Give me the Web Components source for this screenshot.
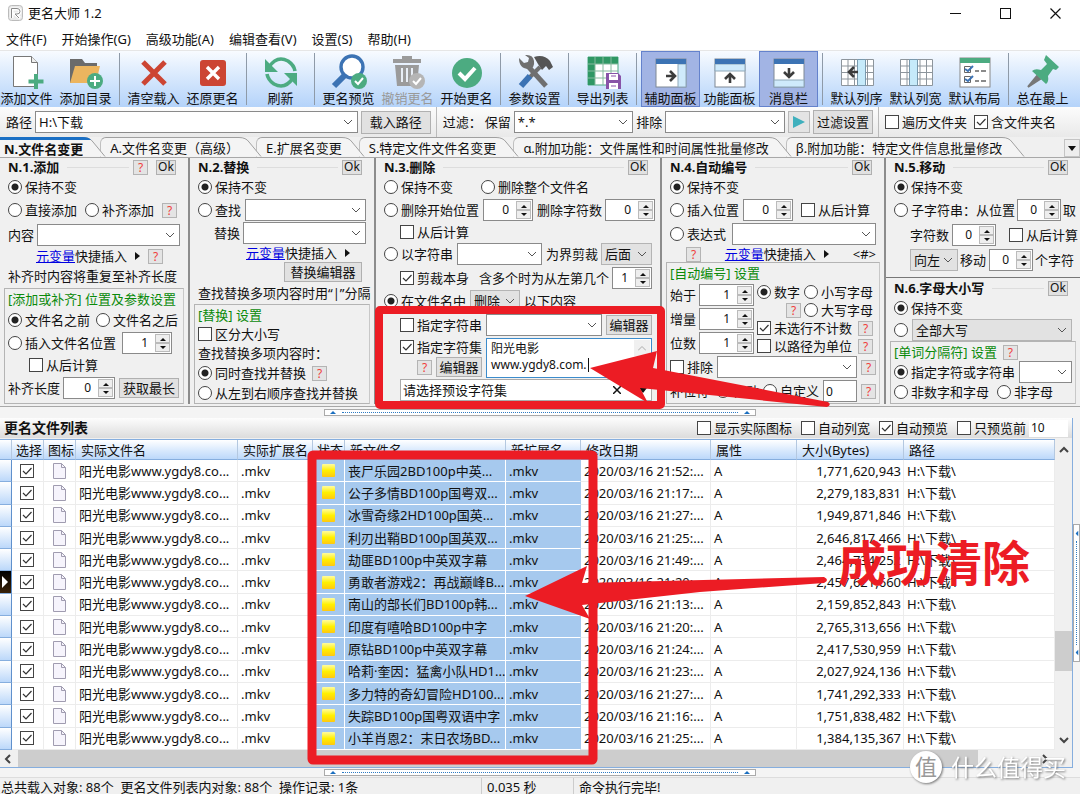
<!DOCTYPE html>
<html lang="zh-CN">
<head>
<meta charset="utf-8">
<title>更名大师 1.2</title>
<style>
html,body{margin:0;height:100%;overflow:hidden}
body{font:13px/18px "Noto Sans","Noto Sans CJK SC",sans-serif;color:#111;background:#f0f0f0}
</style>
</head>
<body>
<rm-app></rm-app>
<script>
const base = `
*{box-sizing:border-box}
:host{white-space:nowrap}
:host([hidden]){display:none}
button,input,select,textarea{font:inherit;color:inherit;margin:0;border-radius:0;outline:0}
button{padding:0;background:none;border:0}
svg{display:block;flex:none}
a{color:#0000e0}
`;
const define = (tag, css, html) => customElements.define(tag, class extends HTMLElement {
  connectedCallback() {
    if (this.shadowRoot) return;
    const t = document.createElement('template');
    t.innerHTML = `<style>${base}${css}</style>` + (typeof html === 'function' ? html(this) : html);
    this.attachShadow({ mode: 'open' }).append(t.content.cloneNode(true));
  }
});
const attr = (el, name, fallback = '') => el.getAttribute(name) ?? fallback;

/* ---------- small controls ---------- */
define('rm-check', `
:host{display:inline-block}
label{display:flex;align-items:center;gap:3px}
input{appearance:none;width:14px;height:14px;border:1px solid #444;background:#fff;flex:none}
input:checked{background:#fff url("data:image/svg+xml,%3Csvg xmlns='http://www.w3.org/2000/svg' viewBox='0 0 12 12'%3E%3Cpath d='M2 6l3 3 5.500-6' fill='none' stroke='%23333' stroke-width='1.200'/%3E%3C/svg%3E")}
`, el => `<label><input type="checkbox" ${el.hasAttribute('checked') ? 'checked' : ''} aria-label="${attr(el, 'label', '选择')}"><slot></slot></label>`);

define('rm-radio', `
:host{display:inline-block}
label{display:flex;align-items:center;gap:3px}
input{appearance:none;width:14px;height:14px;border:1px solid #444;border-radius:50%;background:#fff;flex:none}
input:checked{background:radial-gradient(circle,#222 0 3px,#fff 4px)}
`, el => `<label><input type="radio" ${el.hasAttribute('checked') ? 'checked' : ''}><slot></slot></label>`);

define('rm-combo', `
:host{display:inline-flex;min-width:0}
:host([grow]){flex:1}
label{display:flex;align-items:center;gap:3px;flex:1;min-width:0}
.box{display:grid;align-items:center;width:var(--w,100%);flex:1 1 0;min-width:0}
:host(:not([grow])) .box{flex:none}
select,svg{grid-area:1/1}
select{appearance:none;width:100%;height:22px;border:1px solid #8a8a8a;background:#fff;padding:0 14px 0 3px}
:host([flat]) select{background:#e2e2e2;border-color:#b4b4b4}
svg{justify-self:end;margin-right:5px;pointer-events:none}
`, el => `<label><slot></slot><span class="box"><select aria-label="${attr(el, 'label', '内容')}"><option>${attr(el, 'value')}</option></select>
<svg width="10" height="6" viewBox="0 0 10 6"><path d="M1 1l4 4 4-4" fill="none" stroke="#555"/></svg></span></label>`);

define('rm-spin', `
:host{display:inline-flex}
label{display:flex;align-items:center;gap:3px}
.box{display:flex;width:var(--w,50px);height:22px;border:1px solid #8a8a8a;background:#fff;padding:1px}
input{appearance:textfield;border:0;background:none;min-width:0;flex:1;text-align:right;padding:0 7px 0 0;font-size:12px}
input::-webkit-inner-spin-button{appearance:none}
.b{display:grid;grid-template-rows:1fr 1fr;width:15px}
button{display:grid;place-items:center;background:#eee;border:1px solid #bbb}
`, el => `<label><slot></slot><span class="box"><input type="number" value="${attr(el, 'value', '0')}" aria-label="${attr(el, 'label', '数值')}"><span class="b">
<button type="button" aria-label="增加"><svg width="6" height="4" viewBox="0 0 6 4"><path d="M0 4l3-3 3 3z" fill="#111"/></svg></button>
<button type="button" aria-label="减少"><svg width="6" height="4" viewBox="0 0 6 4"><path d="M0 0l3 3 3-3z" fill="#111"/></svg></button></span></span></label>`);

define('rm-button', `
:host{display:inline-flex}
button{width:var(--w,auto);height:var(--h,20px);line-height:12px;background:#e1e1e1;border:1px solid #b0b0b0;text-align:center}
`, `<button type="button"><slot></slot></button>`);

define('rm-help', `
:host{display:inline-flex}
button{width:15px;height:15px;line-height:13px;background:#e4e4e4;border:1px solid #b4b4b4;color:#f0403c;font-size:12px}
`, `<button type="button" aria-label="帮助">?</button>`);

define('rm-meta', `:host{display:inline-flex;align-items:center;gap:8px}`,
`<span><a href="#meta">元变量</a>快捷插入</span><svg width="5" height="8" viewBox="0 0 5 8"><path d="M0 0l5 4-5 4z" fill="#111"/></svg>`);

/* ---------- title, menu ---------- */
define('rm-titlebar', `
:host{display:flex;align-items:center;height:26px;background:#fff}
.logo{margin:0 5px 0 8px}
h1{font:inherit;margin:0;flex:1}
button{width:50px;height:26px;display:grid;place-items:center}
`, `<svg class="logo" width="15" height="16" viewBox="0 0 15 16"><rect x=".5" y=".5" width="14" height="15" rx="3" fill="#e9e9e9" stroke="#bbb"/><path d="M4 13V4h5q3 0 3 2.500T9 9H7l5 4" fill="none" stroke="#fff" stroke-width="3"/><path d="M3.500 13V3.500H9q3 0 3 2.800T9 9H7l4 4" fill="none" stroke="#888"/></svg>
<h1>更名大师 1.2</h1>
<button aria-label="最小化"><svg width="11" height="11"><path d="M0 5.500h11" stroke="#111"/></svg></button>
<button aria-label="最大化"><svg width="11" height="11"><rect x=".5" y=".5" width="10" height="10" fill="none" stroke="#111"/></svg></button>
<button aria-label="关闭"><svg width="11" height="11"><path d="M.5 .5l10 10M10.500 .5l-10 10" stroke="#111" stroke-width="1.200"/></svg></button>`);

define('rm-menubar', `
:host{display:flex;gap:15px;align-items:center;height:24px;padding:2px 6px 0;background:#fff}
`, ['文件(F)', '开始操作(G)', '高级功能(A)', '编辑查看(V)', '设置(S)', '帮助(H)'].map(t => `<button>${t}</button>`).join(''));

/* ---------- toolbar ---------- */
define('rm-tool', `
:host{display:block;width:59px;flex:none}
button{width:100%;height:56px;display:flex;flex-direction:column;align-items:center;padding-top:1px;line-height:16px;border:1px solid transparent}
:host([on]) button{background:#a2b4e4;border-color:#6482cc}
:host([off]) button{color:#999}
`, el => `<button type="button"><slot name="icon"></slot><span>${attr(el, 'text')}</span></button>`);

const G = '#4cab81', B = '#3c73b4', R = '#cc4533', D = '#6f6f6f';
const win = inner => `<rect x="3" y="6" width="30" height="28" fill="#fff" stroke="#7e8894"/>${inner}<path d="M3 6h30v5H3z" fill="${B}"/>`;
const gridLines = '<path d="M2.500 6.500h32v26h-32zM2.500 13h32M2.500 19.500h32M2.500 26h32M9 6.500v26M15.500 6.500v26M22 6.500v26M28.500 6.500v26" fill="#fff" stroke="#8d959c"/>';
const arrow = (x, y, r) => `<g transform="translate(${x} ${y}) rotate(${r})"><path d="M-5 0h8M-1-5l5 5-5 5" fill="none" stroke="#3c3c3c" stroke-width="2.600"/></g>`;
const icons = {
  addfile: `<path d="M4.500 3.500h18l6 6v24h-24z" fill="#fff" stroke="#777"/><path d="M22.500 3.500v6h6" fill="#eee" stroke="#777"/><path d="M27 21v15M19.500 28.500h15" stroke="${G}" stroke-width="4"/>`,
  adddir: `<path d="M2 6h12l3 4h12v20H2z" fill="#6b6b6b"/><path d="M7 13h25l-4 17H2z" fill="#ecb55f"/><circle cx="27" cy="28" r="8" fill="${G}"/><path d="M27 23v10M22 28h10" stroke="#fff" stroke-width="2"/>`,
  clear: `<path d="M7 9l22 22M29 9L7 31" stroke="${R}" stroke-width="5"/>`,
  undo: `<rect x="5" y="7" width="26" height="26" rx="3" fill="${R}"/><path d="M12 14l12 12M24 14L12 26" stroke="#fff" stroke-width="3.400"/>`,
  refresh: `<g fill="none" stroke="${G}" stroke-width="3.600"><path d="M6 14Q14 2 25 8q6 4 7 10"/><path d="M30 25q-8 12-19 6-6-4-7-10"/></g><path d="M2 6v13h13zM34 33V20H21z" fill="${G}"/>`,
  preview: `<path d="M15 21L3 33" stroke="${B}" stroke-width="6"/><circle cx="21" cy="14" r="11" fill="#fff" stroke="${B}" stroke-width="3.400"/><circle cx="28" cy="28" r="8" fill="${G}"/><path d="M24 28l3 3 5-6" fill="none" stroke="#fff" stroke-width="2"/>`,
  trash: `<path d="M5 12h24l-2 21H7zM3 6h28v4H3zM12 3h10v3H12z" fill="#9b9b9b"/><path d="M12 15v14M17 15v14M22 15v8" stroke="#e8eef6" stroke-width="2"/><circle cx="27" cy="28" r="8" fill="#b5b5b5"/><path d="M23 28l3 3 5-6" fill="none" stroke="#fff" stroke-width="2"/>`,
  start: `<circle cx="18" cy="20" r="15" fill="${G}"/><path d="M10 20l6 6 10-11" fill="none" stroke="#fff" stroke-width="4"/>`,
  tools: `<path d="M9 11l20 22" stroke="${D}" stroke-width="5"/><path d="M2 5l5 5 4-1 1-4-4-3q8-1 9 6t-5 8q-10 0-10-11z" fill="${D}"/><path d="M23 14L13 24" stroke="${D}" stroke-width="4"/><path d="M17 4q10-3 16 4l3 6-4 3-3-4-4 4-4-6z" fill="#555"/><path d="M13 23L4 33" stroke="${B}" stroke-width="6"/>`,
  export: `<path d="M3 4h30v28H3z" fill="#fff" stroke="${G}"/><path d="M3 4h30v7H10v21H3z" fill="#2f9764"/><path d="M3 11h30M3 18h30M3 25h30M10 4v28M18 4v28M26 4v28" stroke="#86b99e"/><path d="M21 20h12l3 3v13H21z" fill="#8853a8"/><path d="M24 21h9v6h-9zM24 30h9v6h-9z" fill="#fff"/><path d="M26 23h5M26 33h5" stroke="#8853a8"/>`,
  side: win('<path d="M25 11h8v23h-8z" fill="#cfeafb" stroke="#8fa8b8"/>') + arrow(18, 23, 0),
  func: win('<path d="M3 11h30v7H3z" fill="#cfeafb" stroke="#8fa8b8"/>') + arrow(18, 25, -90),
  msg: win('<path d="M3 27h30v7H3z" fill="#cfeafb" stroke="#8fa8b8"/>') + arrow(18, 20, 90),
  order: gridLines + '<path d="M18.500 6.500h8v26h-8z" fill="#c6eafa" stroke="#7a99ad"/>' + arrow(14, 19, 180),
  width: gridLines + '<path d="M11.500 6.500h8v26h-8z" fill="#c6eafa" stroke="#7a99ad"/>',
  layout: `<rect x="3" y="5" width="30" height="29" fill="#fff" stroke="#888"/><path d="M3 5h30v5H3z" fill="${G}"/><path d="M7.500 13.500h6v6h-6zM7.500 23.500h6v6h-6z" fill="none" stroke="#666"/><path d="M8 16l3 2 5-5M8 26l3 2 5-5" fill="none" stroke="${B}" stroke-width="2"/><path d="M18 18h4M24 18h5M18 28h4M24 28h5" stroke="#666" stroke-width="1.500"/>`,
  pin: `<path d="M12 23L3 34l12-8z" fill="#777" stroke="#777" stroke-width="2"/><path d="M21 2l13 12-3 3-3-1-5 7q1 6-2 8L7 18q3-3 9-1l6-6-3-4z" fill="${G}"/>`
};
const tools = [['addfile', '添加文件'], ['adddir', '添加目录'], 0, ['clear', '清空载入'], ['undo', '还原更名'], 0, ['refresh', '刷新'], 0,
  ['preview', '更名预览'], ['trash', '撤销更名', 'off'], ['start', '开始更名'], 0, ['tools', '参数设置'], 0, ['export', '导出列表'], 0,
  ['side', '辅助面板', 'on'], ['func', '功能面板'], ['msg', '消息栏', 'on'], 0, ['order', '默认列序'], ['width', '默认列宽'], ['layout', '默认布局'], 0, ['pin', '总在最上']];
define('rm-toolbar', `
:host{display:flex;height:57px;background:linear-gradient(#f8fbff,#dcebfd 40%,#b4d3fa);border-top:1px solid #e6e6e6;overflow:hidden}
nav{display:flex;margin-left:-3px}
hr{width:1px;height:52px;margin:2px 4px;border:0;background:#8e9aa8}
`, '<nav>' + tools.map(t => t ? `<rm-tool text="${t[1]}" ${t[2] || ''}><svg slot="icon" width="36" height="37" viewBox="0 0 36 37">${icons[t[0]]}</svg></rm-tool>` : '<hr>').join('') + '</nav>');

/* ---------- path and filter bar ---------- */
define('rm-pathbar', `
:host{display:flex;align-items:center;gap:3px;height:30px;padding:0 24px 0 6px;background:linear-gradient(#fcfcfc,#e9e9e9)}
i{width:1px;height:30px;background:#bbb;margin:0 3px 0 2px}
.path{flex:355 1 0}
.f{flex:150 1 0}
.play button{width:22px;height:22px;display:grid;place-items:center;background:#e4e4e4;border:1px solid #b8b8b8}
rm-check+rm-check{margin-left:4px}
`, `<rm-combo grow class="path" value="H:\\下载" label="路径">路径</rm-combo>
<rm-button style="--w:70px;--h:23px">载入路径</rm-button><i></i>
<span>过滤：</span><rm-combo grow class="f" value="*.*" label="保留">保留</rm-combo>
<rm-combo grow class="f" label="排除">排除</rm-combo>
<span class="play"><button aria-label="应用过滤"><svg width="12" height="12"><path d="M0 0l12 6-12 6z" fill="#3fb0bd"/></svg></button></span>
<rm-button style="--w:60px;--h:24px">过滤设置</rm-button><i></i>
<rm-check label="遍历文件夹">遍历文件夹</rm-check><rm-check checked label="含文件夹名">含文件夹名</rm-check>`);

/* ---------- tabs ---------- */
define('rm-tab', `
:host{display:flex;position:relative;margin-right:-7px}
button{height:20px;background:#f4f4f4;border-top:1px solid #a0a0a0;border-left:1px solid #c0c0c0;border-top-left-radius:6px;padding:0 0 0 9px;display:flex;align-items:center}
:host([on]) button{padding-left:4px;font-weight:bold;border-top:3px solid #1a6fc4;border-left:0;border-radius:0}
`, el => `<button role="tab"><slot></slot></button><svg width="24" height="20" viewBox="0 0 24 20"><path d="M0 .5Q7 .5 10 5L22 19.500H0z" fill="#f4f4f4"/><path d="M0 .5Q7 .5 10 5L22 19.500" fill="none" stroke="#a0a0a0"/>${el.hasAttribute('on') ? '<path d="M0 0Q6 0 8 3H0z" fill="#1a6fc4"/>' : ''}</svg>`);
const tabs = ['N.文件名变更', 'A.文件名变更（高级）', 'E.扩展名变更', 'S.特定文件文件名变更', 'α.附加功能：文件属性和时间属性批量修改', 'β.附加功能：特定文件信息批量修改'];
define('rm-tabs', `
:host{display:flex;align-items:flex-end;height:21px;background:#f0f0f0;border-bottom:1px solid #a8a8a8}
.more{margin-left:auto;width:16px;height:18px;display:grid;place-items:center;border:1px solid #c4c4c4;background:#eee}
`, tabs.map((t, i) => `<rm-tab ${i ? '' : 'on'} style="z-index:${9 - i}">${t}</rm-tab>`).join('') +
`<button class="more" aria-label="更多"><svg width="8" height="5"><path d="M0 0h8l-4 5z" fill="#111"/></svg></button>`);

/* ---------- function panels ---------- */
define('rm-panel', `
:host{display:flex;flex-direction:column;min-width:0}
header{display:flex;align-items:center;gap:8px;height:18px;padding:0 12px 0 8px;flex:none}
h2{font:inherit;font-weight:bold;margin:0}
header span{flex:1;border-top:1px solid #ddd;margin-right:-4px}
rm-button{font-size:12px}
`, el => `<header><h2>${attr(el, 'title-text')}</h2><span></span>${el.hasAttribute('help') ? '<rm-help></rm-help>' : ''}<rm-button style="--w:20px;--h:15px">Ok</rm-button></header><slot></slot>`);

define('rm-row', `
:host{display:flex;align-items:center;gap:var(--gap,4px);padding:0 8px;flex:none;height:22px}
:host([h="16"]){height:16px}
:host([h="18"]){height:18px}
:host([h="20"]){height:20px}
:host([h="24"]){height:24px}
:host([h="26"]){height:26px}
:host([in="1"]){padding-left:24px}
:host([in="2"]){padding-left:36px}
:host([in="3"]){padding-left:56px}
:host([gap="2"]){--gap:2px;padding-right:2px}
:host([gap="6"]){--gap:6px}
:host([gap="8"]){--gap:8px}
:host([end]){justify-content:flex-end;padding-right:12px}
`, `<slot></slot>`);

define('rm-group', `
:host{display:flex;flex-direction:column;margin:0 4px;border:1px solid #b4b4b4;border-right-color:#c8c8c8;flex:1}
.t{display:flex;align-items:center;gap:6px;height:20px;padding:0 3px;color:#0a8a0a}
::slotted(rm-row){padding-right:3px}
::slotted(rm-row:not([in])){padding-left:3px}
`, el => `<div class="t">${attr(el, 'title-text')}${el.hasAttribute('help') ? '<rm-help></rm-help>' : ''}</div><slot></slot>`);

define('rm-panels', `
:host{display:grid;grid-template-columns:190fr 186fr 286fr 224fr 194fr;height:249px;padding-bottom:3px;border-bottom:1px solid #a8a8a8;background:#f0f0f0}
:host>rm-panel,.stack{border-right:2px solid #8c8c8c;min-width:0}
.stack{display:flex;flex-direction:column;border-right:0}
.stack rm-panel:last-child{flex:1;border-top:1px solid #777;margin-top:5px;padding-top:1px}
.set{display:grid;grid-template-columns:auto 1fr;grid-template-rows:18px 20px;gap:1px 4px;padding:0 8px 0 24px;height:40px}
.area{grid-area:1/2/3/3;display:grid;position:relative}
textarea{border:1px solid #3c8ccc;background:#fff;resize:none;padding:2px 4px;line-height:16px;width:100%;height:40px;font-size:12px;overflow:hidden}
.caret{position:absolute;left:102px;top:20px;width:1px;height:14px;background:#111}
.up{position:absolute;right:2px;top:2px;width:16px;height:16px;display:grid;place-items:center;background:#f0f0f0}
.set span{display:flex;align-items:center;justify-content:flex-end;gap:4px}
.preset{flex:1;height:22px;display:flex;align-items:center;background:#fff;border:1px solid #aaa;padding-right:4px}
.preset input{border:0;background:none;flex:1;min-width:0;padding:0 2px}
.preset button{width:14px;margin-right:12px}
.num{display:grid;grid-template-columns:auto 1fr;gap:3px;padding:0 3px}
.num .l{display:grid;grid-template-rows:repeat(3,24px)}
.num .r{display:grid;grid-template-rows:repeat(4,18px);align-items:center}
.num .r div{display:flex;align-items:center;gap:3px;padding-right:3px}
.num .r div.e{justify-content:flex-end}
.num .r rm-help{margin-left:auto}
.num .r .e rm-help{margin-left:0}
.own{width:34px;height:22px;border:1px solid #8a8a8a;background:#fff;padding:0 2px;font-size:12px}
.p,.q{margin-left:auto}
`, `
<rm-panel title-text="N.1.添加" help>
<rm-row><rm-radio checked>保持不变</rm-radio></rm-row>
<rm-row h="24" gap="8"><rm-radio>直接添加</rm-radio><rm-radio>补齐添加</rm-radio><rm-help></rm-help></rm-row>
<rm-row h="26"><rm-combo grow label="内容">内容</rm-combo></rm-row>
<rm-row h="16" in="2"><rm-meta></rm-meta><span></span><rm-help></rm-help></rm-row>
<rm-row h="24">补齐时内容将重复至补齐长度</rm-row>
<rm-group title-text="[添加或补齐] 位置及参数设置">
<rm-row gap="6"><rm-radio checked>文件名之前</rm-radio><rm-radio>文件名之后</rm-radio></rm-row>
<rm-row h="24" gap="6"><rm-radio>插入文件名位置</rm-radio><rm-spin value="1"></rm-spin></rm-row>
<rm-row h="20" in="1"><rm-check label="从后计算">从后计算</rm-check></rm-row>
<rm-row h="26"><rm-spin style="--w:52px" label="补齐长度">补齐长度</rm-spin><rm-button style="--w:60px">获取最长</rm-button></rm-row>
</rm-group></rm-panel>

<rm-panel title-text="N.2.替换">
<rm-row><rm-radio checked>保持不变</rm-radio></rm-row>
<rm-row h="24"><rm-radio>查找</rm-radio><rm-combo grow label="查找"></rm-combo></rm-row>
<rm-row in="1"><rm-combo grow label="替换">替换</rm-combo></rm-row>
<rm-row h="18" in="3"><rm-meta></rm-meta></rm-row>
<rm-row h="20" end><rm-button style="--w:78px">替换编辑器</rm-button></rm-row>
<rm-row>查找替换多项内容时用“|”分隔</rm-row>
<rm-group title-text="[替换] 设置">
<rm-row h="18"><rm-check label="区分大小写">区分大小写</rm-check></rm-row>
<rm-row h="20">查找替换多项内容时：</rm-row>
<rm-row h="20" gap="6"><rm-radio checked>同时查找并替换</rm-radio><rm-help></rm-help></rm-row>
<rm-row h="20"><rm-radio>从左到右顺序查找并替换</rm-radio></rm-row>
</rm-group></rm-panel>

<rm-panel title-text="N.3.删除">
<rm-row><rm-radio>保持不变</rm-radio><span style="width:20px"></span><rm-radio>删除整个文件名</rm-radio></rm-row>
<rm-row h="24"><rm-radio>删除开始位置</rm-radio><rm-spin></rm-spin><rm-spin class="p" label="删除字符数">删除字符数</rm-spin></rm-row>
<rm-row h="20" in="1"><rm-check label="从后计算">从后计算</rm-check></rm-row>
<rm-row h="24"><rm-radio>以字符串</rm-radio><rm-combo grow label="以字符串"></rm-combo><rm-combo flat value="后面" style="--w:51px">为界剪裁</rm-combo></rm-row>
<rm-row h="24" in="1"><rm-check checked label="剪裁本身">剪裁本身</rm-check><rm-spin class="p" value="1" style="--w:40px">含多个时为从左第几个</rm-spin></rm-row>
<rm-row><rm-radio checked>在文件名中</rm-radio><rm-combo flat value="删除" style="--w:50px"></rm-combo><span>以下内容</span></rm-row>
<rm-row h="26" in="1"><rm-check label="指定字符串">指定字符串</rm-check><rm-combo grow label="指定字符串"></rm-combo><rm-button style="--w:46px">编辑器</rm-button></rm-row>
<div class="set"><rm-check checked label="指定字符集">指定字符集</rm-check><span><rm-help></rm-help><rm-button style="--w:46px">编辑器</rm-button></span><div class="area"><textarea aria-label="字符集">阳光电影
www.ygdy8.com.</textarea><div class="caret"></div><div class="up"><svg width="8" height="5"><path d="M0 4.500l4-4 4 4" fill="none" stroke="#aaa"/></svg></div></div></div>
<rm-row h="24" in="1"><div class="preset"><input value="请选择预设字符集" aria-label="预设字符集"><button aria-label="清除"><svg width="8" height="8"><path d="M0 0l8 8M8 0L0 8" stroke="#111" stroke-width="1.500"/></svg></button><svg width="8" height="5"><path d="M0 0h8l-4 5z" fill="#111"/></svg></div></rm-row>
</rm-panel>

<rm-panel title-text="N.4.自动编号">
<rm-row><rm-radio checked>保持不变</rm-radio></rm-row>
<rm-row h="24"><rm-radio>插入位置</rm-radio><rm-spin></rm-spin><span></span><rm-check label="从后计算">从后计算</rm-check></rm-row>
<rm-row h="24" gap="6"><rm-radio>表达式</rm-radio><rm-combo grow label="表达式"></rm-combo></rm-row>
<rm-row h="16" in="1"><rm-help></rm-help><rm-meta class="p"></rm-meta><span class="p">&lt;#&gt;</span></rm-row>
<rm-group title-text="[自动编号] 设置">
<div class="num"><div class="l"><rm-spin value="1" style="--w:55px">始于</rm-spin><rm-spin value="1" style="--w:55px">增量</rm-spin><rm-spin value="1" style="--w:55px">位数</rm-spin></div>
<div class="r"><div><rm-radio checked>数字</rm-radio><rm-radio class="q">小写字母</rm-radio></div><div class="e"><rm-help></rm-help><rm-radio>大写字母</rm-radio></div><div><rm-check checked>未选行不计数</rm-check><rm-help></rm-help></div><div><rm-check>以路径为单位</rm-check><rm-help></rm-help></div></div></div>
<rm-row h="24"><rm-check label="排除">排除</rm-check><rm-combo grow label="排除"></rm-combo><rm-help></rm-help></rm-row>
<rm-row h="24"><span>补位符</span><rm-radio class="q">自动</rm-radio><rm-radio>自定义</rm-radio><input class="own" value="0" aria-label="自定义"><rm-help></rm-help></rm-row>
</rm-group></rm-panel>

<div class="stack"><rm-panel title-text="N.5.移动">
<rm-row><rm-radio checked>保持不变</rm-radio></rm-row>
<rm-row h="24" gap="2"><rm-radio>子字符串：从位置</rm-radio><rm-spin style="--w:44px"></rm-spin>取</rm-row>
<rm-row h="26" in="1" gap="2"><rm-spin style="--w:44px">字符数</rm-spin><rm-check class="p" label="从后计算">从后计算</rm-check></rm-row>
<rm-row h="24" in="1" gap="2"><rm-combo flat value="向左" style="--w:48px"></rm-combo><rm-spin style="--w:44px">移动</rm-spin>个字符</rm-row>
</rm-panel>
<rm-panel title-text="N.6.字母大小写">
<rm-row><rm-radio checked>保持不变</rm-radio></rm-row>
<rm-row><rm-radio></rm-radio><rm-combo grow flat value="全部大写"></rm-combo></rm-row>
<rm-group title-text="[单词分隔符] 设置" help>
<rm-row h="20"><rm-radio checked>指定字符或字符串</rm-radio><rm-combo grow label="分隔符"></rm-combo></rm-row>
<rm-row h="20" gap="8"><rm-radio>非数字和字母</rm-radio><rm-radio>非字母</rm-radio></rm-row>
</rm-group></rm-panel></div>`);

/* ---------- splitter ---------- */
define('rm-splitter', `
:host{display:flex;justify-content:center;align-items:flex-end;background:#f4f4f4;height:11px;padding-bottom:2px}
:host([slim]){height:9px;padding-bottom:1px}
div{display:flex;align-items:center;gap:6px;width:40%;height:7px;border:1px solid #aaa;background:#fff;padding:0 5px}
i{flex:1;border-top:1px dotted #2e7cc4}
:host([vertical]){height:auto;width:7px;align-items:center;padding:0}
:host([vertical]) div{flex-direction:column;width:7px;height:138px;padding:7px 0}
:host([vertical]) i{border-top:0;border-left:1px dotted #2e7cc4}
:host([vertical]) svg{transform:rotate(-90deg)}
`, `<div><svg width="6" height="3"><path d="M0 3l3-3 3 3z" fill="#1b6fc0"/></svg><i></i><svg width="6" height="3"><path d="M0 3l3-3 3 3z" fill="#1b6fc0"/></svg></div>`);

/* ---------- file list ---------- */
define('rm-listbar', `
:host{display:flex;align-items:center;gap:9px;height:20px;padding:0 4px;background:linear-gradient(#fdfdfd,#dcdcdc);margin-bottom:2px}
h2{font-size:14px;margin:0;flex:1}
span{display:flex;align-items:center;gap:3px}
input{width:39px;height:17px;border:0;background:#fff;font-size:12px;padding:0 2px}
`, `<h2>更名文件列表</h2><rm-check>显示实际图标</rm-check><rm-check>自动列宽</rm-check><rm-check checked>自动预览</rm-check><span><rm-check>只预览前</rm-check><input value="10" aria-label="预览数量"></span>`);

const files = [
  ['丧尸乐园2BD100p中英...', '52', '1,771,620,943'], ['公子多情BD100p国粤双...', '17', '2,279,183,831'],
  ['冰雪奇缘2HD100p国英...', '27', '1,949,871,846'], ['利刃出鞘BD100p国英双...', '25', '2,646,817,466'],
  ['劫匪BD100p中英双字幕', '49', '2,464,734,252'], ['勇敢者游戏2：再战巅峰B...', '20', '2,457,621,660'],
  ['南山的部长们BD100p韩...', '13', '2,159,852,843'], ['印度有嘻哈BD100p中字', '20', '2,765,313,656'],
  ['原钻BD100p中英双字幕', '24', '2,417,530,959'], ['哈莉·奎因：猛禽小队HD1...', '23', '2,027,924,136'],
  ['多力特的奇幻冒险HD100...', '27', '1,741,292,333'], ['失踪BD100p国粤双语中字', '16', '1,751,838,482'],
  ['小羊肖恩2：末日农场BD...', '25', '1,384,135,367']];
const page = '<svg width="15" height="18" viewBox="0 0 15 18"><path d="M1.500 1.500h8l4 4v11h-12z" fill="#f6f4fc" stroke="#a09cb0"/><path d="M9.500 1.500v4h4" fill="none" stroke="#a09cb0"/></svg>';
define('rm-filetable', `
:host{display:block;height:100%;overflow:hidden;background:#fff}
table{width:100%;height:100%;table-layout:fixed;border-collapse:separate;border-spacing:0}
th{height:20px;font-weight:normal;text-align:left;padding:0 5px;background:linear-gradient(#fff,#dcebfd 50%,#bcd8fa);border-bottom:1px solid #86aede;border-right:1px solid #b4c8e0;line-height:16px}
td{padding:0 3px;border-right:1px solid #ececec;border-bottom:1px solid #ececec;overflow:hidden;line-height:16px}
td:first-child{background:linear-gradient(#fff,#bcd8fa);border-right:1px solid #5f90cc;border-bottom-color:#86aede;padding:0 2px}
tr.cur td:first-child{background:linear-gradient(#000,#3a2208)}
td.s{background:#a6c9ee;border-color:#fff}
td.s:nth-child(8){border-right-color:#a6c9ee}
td.n{text-align:right;padding-right:2px}
td.c rm-check,td.c svg{display:block;width:15px;margin:0 auto}
td.y i{display:block;width:13px;height:13px;margin-left:6px;border-radius:1px;background:linear-gradient(#fffca0,#fff000 50%,#ffc810)}
`, `<table><colgroup>${[12, 32, 32, 162, 75, 32, 161, 75, 130, 86, 107].map(w => `<col style="width:${w}px">`).join('')}<col></colgroup>
<thead><tr>${['', '选择', '图标', '实际文件名', '实际扩展名', '状态', '新文件名', '新扩展名', '修改日期', '属性', '大小(Bytes)', '路径'].map((t, i) => `<th${i < 3 || i === 5 ? ' style="padding:0 2px 0 4px"' : ''}>${t}</th>`).join('')}</tr></thead>
<tbody>${files.map((f, i) => `<tr${i === 5 ? ' class="cur"' : ''}><td>${i === 5 ? '<svg width="6" height="12"><path d="M0 0l6 6-6 6z" fill="#fff"/></svg>' : ''}</td><td class="c"><rm-check checked></rm-check></td><td class="c">${page}</td><td>阳光电影www.ygdy8.co...</td><td>.mkv</td><td class="s y"><i></i></td><td class="s">${f[0]}</td><td class="s">.mkv</td><td>2020/03/16 21:${f[1]}:...</td><td>A</td><td class="n">${f[2]}</td><td>H:\\下载\\</td></tr>`).join('')}</tbody></table>`);

const chev = r => `<svg width="10" height="10" viewBox="0 0 10 10" style="transform:rotate(${r}deg)"><path d="M1 7l4-4 4 4" fill="none" stroke="#444" stroke-width="2"/></svg>`;
define('rm-scroll', `
:host{display:flex;flex-direction:column;align-items:center;background:#f0f0f0;width:17px;padding:5px 0}
:host([h]){flex-direction:row;width:auto;height:17px;padding:0 22px 0 3px}
i{background:#cdcdcd}
:host(:not([h])) i{width:17px;height:40px;flex:none}
:host([h]) i{align-self:stretch;flex:959 1 0;margin-left:5px}
b{flex:172 1 0}
b.e{flex:62 1 0}
`, el => el.hasAttribute('h') ? chev(-90) + '<i></i><b class="e"></b>' + chev(90) : chev(0) + '<b></b><i></i><b class="e"></b>' + chev(180));

define('rm-filelist', `
:host{display:grid;grid-template-columns:1fr 7px;grid-template-rows:minmax(0,1fr);min-height:0}
.pane{display:grid;grid-template-columns:1fr auto;grid-template-rows:auto minmax(0,1fr) auto;border-right:1px solid #86aede;border-bottom:1px solid #86aede;min-height:0}
rm-listbar{grid-column:1/3}
.tb{border-top:1px solid #86aede;min-height:0;margin-top:-1px}
rm-scroll[h]{grid-column:1/3}
`, `<div class="pane"><rm-listbar></rm-listbar><div class="tb"><rm-filetable></rm-filetable></div><rm-scroll></rm-scroll><rm-scroll h></rm-scroll></div><rm-splitter vertical></rm-splitter>`);

define('rm-status', `
:host{display:grid;grid-template-columns:481fr 92fr 507fr;height:17px;background:#f0f0f0;border-top:1px solid #ddd;line-height:16px;overflow:hidden}
span{padding:1px 0 0 5px;border-left:1px solid #ccc;white-space:pre}
span:first-of-type{border:0;padding-left:1px}
`, `<span>总共载入对象: 88个  更名文件列表内对象: 88个  操作记录: 1条</span><span>0.035 秒</span><span>命令执行完毕!</span>`);

/* ---------- tutorial marks drawn over the window ---------- */
define('rm-marks', `
:host{position:absolute;inset:0;pointer-events:none;overflow:hidden}
text{font-family:"Noto Sans CJK SC",sans-serif}
`, `<svg width="1080" height="794" viewBox="0 0 1080 794">
<g fill="none" stroke="#ec1c24"><rect x="379" y="310" width="282" height="95" rx="1" stroke-width="8" stroke-linejoin="round"/><rect x="312" y="455" width="281" height="305" rx="1" stroke-width="9" stroke-linejoin="round"/></g>
<g fill="#ec1c24"><path d="M590 368L657 351 653 368 828 402Q832 405 827 407L640 388 648 403Z"/><path d="M525 596L587 566 582 583 824 577Q830 580 824 583L700 592 582 605 590 619Z"/>
<text x="838" y="581" font-size="48" font-weight="bold">成功清除</text></g>
<g style="filter:drop-shadow(1px 1px 1px #777)"><circle cx="926" cy="767" r="16" fill="#fff"/><text x="951" y="776" font-size="23" fill="#fff">什么值得买</text></g>
<text x="915" y="775" font-size="22" fill="#999">值</text></svg>`);

define('rm-app', `
:host{display:flex;flex-direction:column;height:100vh;position:relative;overflow:hidden}
:host>*{flex:none}
:host>rm-filelist{flex:1}
`, `<rm-titlebar></rm-titlebar><rm-menubar></rm-menubar><rm-toolbar></rm-toolbar><rm-pathbar></rm-pathbar><rm-tabs></rm-tabs><rm-panels></rm-panels>
<rm-splitter></rm-splitter><rm-filelist></rm-filelist><rm-splitter slim></rm-splitter><rm-status></rm-status><rm-marks></rm-marks>`);
</script>
</body>
</html>
